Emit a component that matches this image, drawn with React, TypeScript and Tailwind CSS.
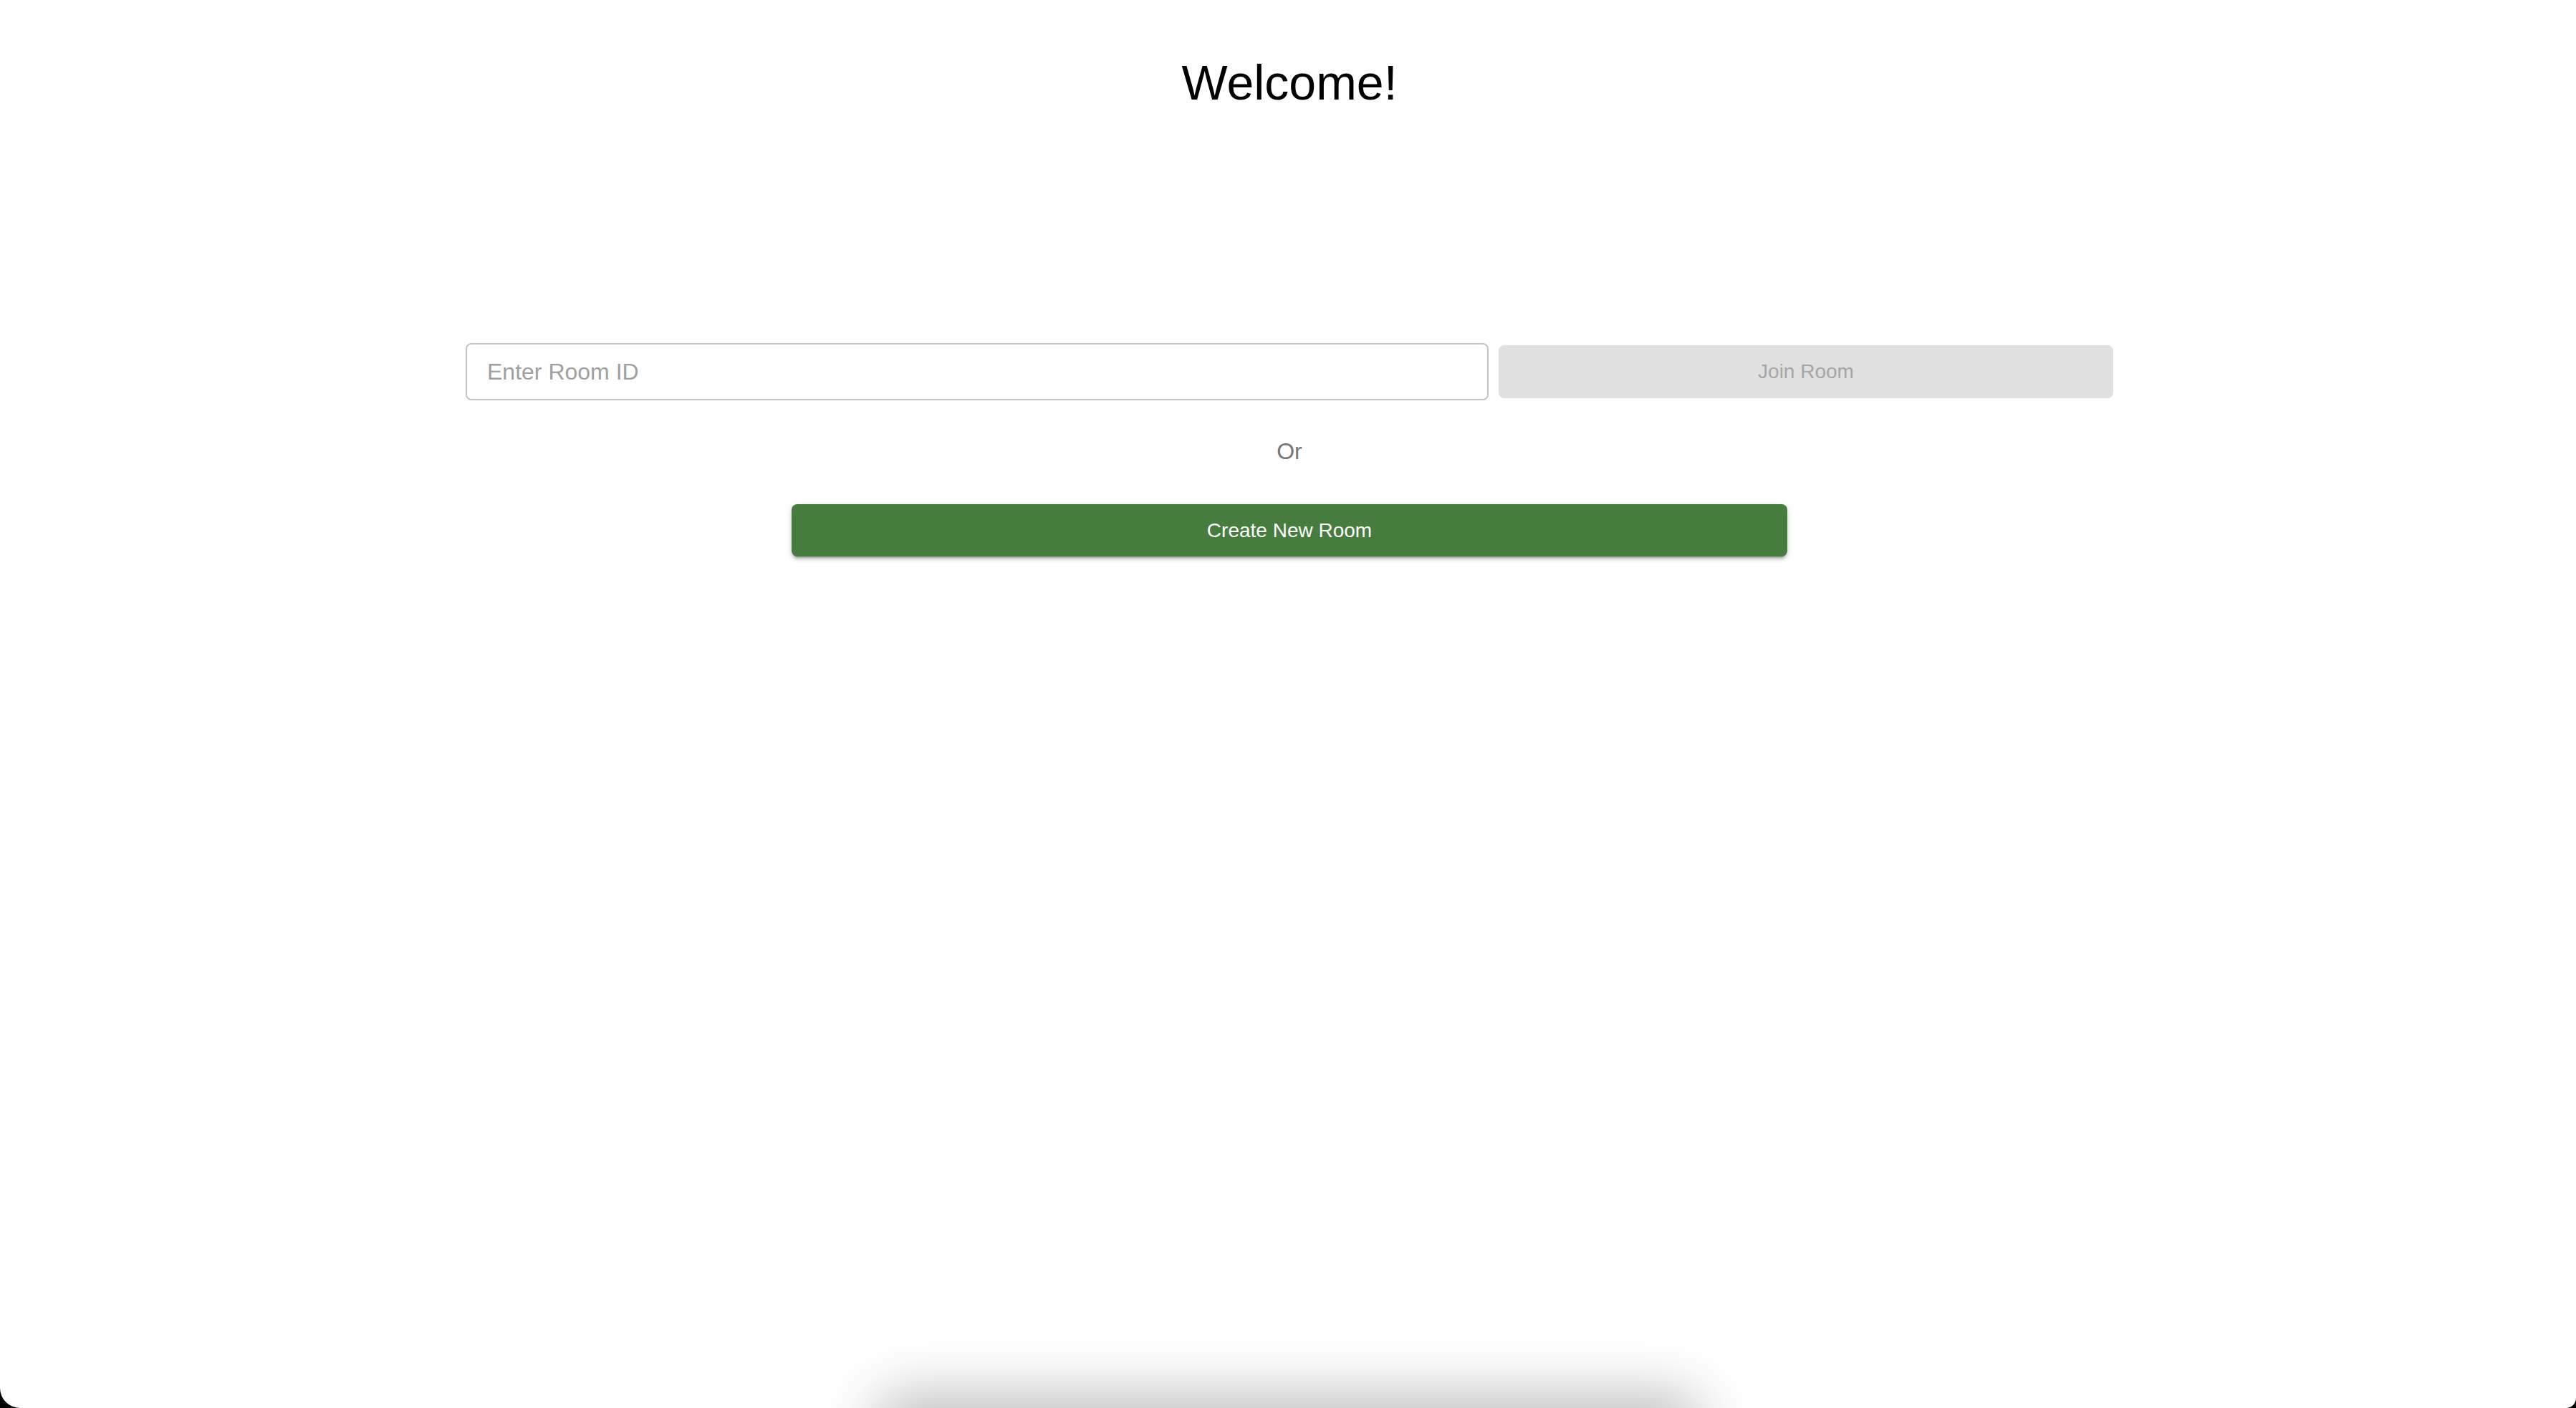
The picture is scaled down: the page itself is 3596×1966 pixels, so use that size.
import React from "react";

const App = () => {
  return (
    <div className="h-screen bg-black">
      <div className="relative h-full overflow-hidden bg-white rounded-bl-[28px] rounded-br-[14px] flex flex-col items-center pl-[4px] font-['Liberation_Sans',Arial,sans-serif]">
        <h1 className="mt-[73px] text-[68px] leading-[84px] text-black">Welcome!</h1>

        <div className="mt-[322px] flex w-[2300px] items-center gap-[14px]">
          <input
            type="text"
            placeholder="Enter Room ID"
            className="w-[1428px] h-[80px] border-2 border-[#c4c4c4] rounded-[8px] px-[28px] text-[32px] text-black outline-none placeholder:text-[#a0a0a0]"
          />
          <button
            disabled
            className="flex-1 h-[74px] rounded-[8px] bg-[#e0e0e0] text-[#a6a6a6] text-[28px]"
          >
            Join Room
          </button>
        </div>

        <p className="mt-[47px] text-[32px] leading-[48px] text-[#777777]">Or</p>

        <button className="mt-[50px] w-[1390px] h-[73px] rounded-[8px] bg-[#467c3e] text-white text-[28px] shadow-[0_6px_2px_-4px_rgba(0,0,0,0.2),0_4px_4px_0_rgba(0,0,0,0.14),0_2px_10px_0_rgba(0,0,0,0.12)]">
          Create New Room
        </button>

        {/* something sitting just under the fold, only its shadow shows */}
        <div className="absolute top-full left-1/2 -translate-x-1/2 w-[1120px] h-[60px] rounded-[40px] bg-white shadow-[0_0_80px_20px_rgba(0,0,0,0.26)]" />
      </div>
    </div>
  );
};

export default App;
